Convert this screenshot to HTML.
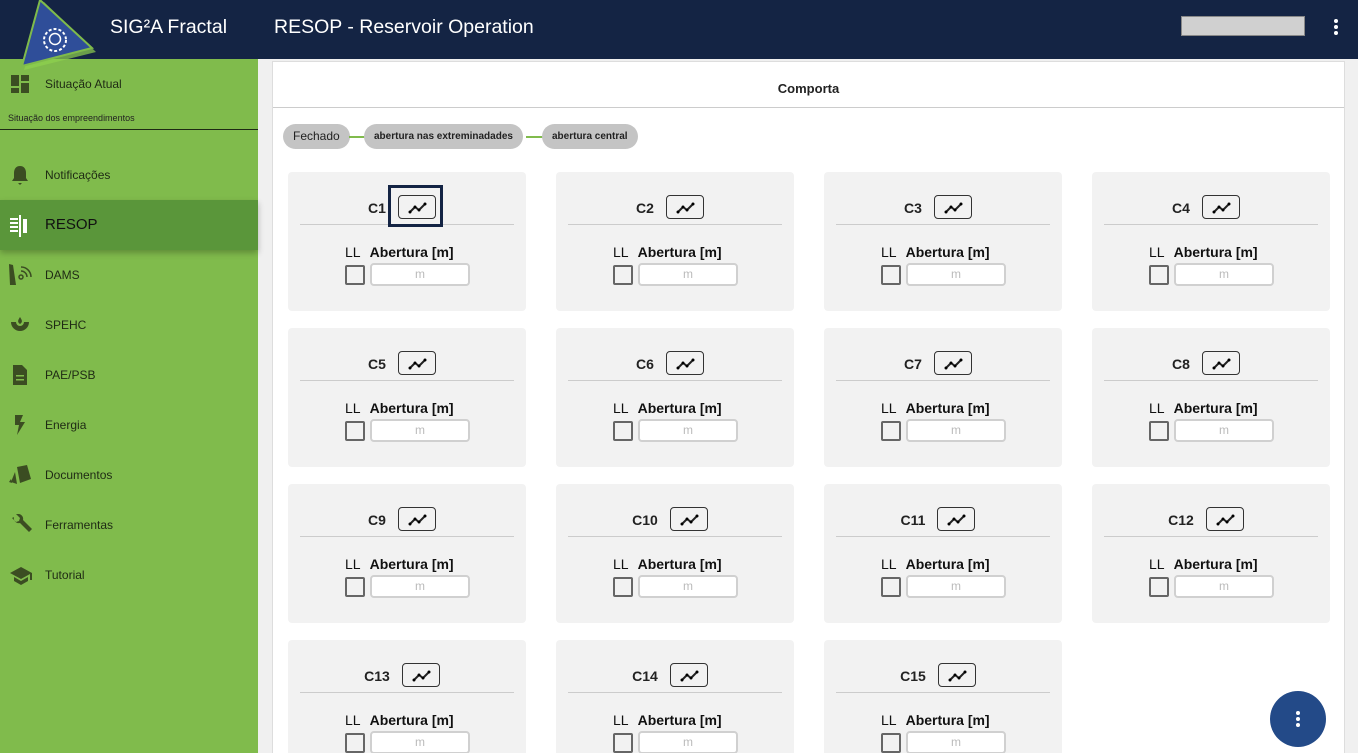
<!DOCTYPE html>
<html><head><meta charset="utf-8"><style>
*{box-sizing:border-box;margin:0;padding:0}
html,body{width:1358px;height:753px;overflow:hidden}
body{font-family:"Liberation Sans",Arial,sans-serif;background:#f0f0f0;position:relative}
.top{position:absolute;left:0;top:0;width:1358px;height:59px;background:#142444;color:#fff;z-index:2}
.top .t1{position:absolute;left:110px;top:16px;font-size:19.5px}
.top .t2{position:absolute;left:274px;top:16px;font-size:19.5px}
.srch{position:absolute;left:1181px;top:16px;width:124px;height:20px;background:#d0d0d0;border:1px solid #888}
.dots{position:absolute;left:1334px;top:19px}
.dots i{display:block;width:4px;height:4px;border-radius:50%;background:#fff;margin-bottom:2px}
.side{position:absolute;left:0;top:59px;width:258px;height:694px;background:#80bb4c}
.item{position:absolute;left:0;width:258px;height:50px;font-size:12px;color:#1e2a14}
.item span{position:absolute;left:45px;top:18px}
.item svg{position:absolute;left:9px;top:14px}
.panel{position:absolute;left:272px;top:61px;width:1073px;height:700px;background:#fff;border:1px solid #ddd}
.ptitle{height:46px;border-bottom:1px solid #ccc;text-align:center;font-size:13px;font-weight:bold;line-height:54px;color:#222}
.chip{position:absolute;top:62px;height:25px;border-radius:13px;background:#c4c4c4;font-size:12px;color:#222;padding:0 10px;line-height:25px}
.line{position:absolute;top:74px;height:2px;background:#80bb4c}
.card{position:absolute;width:238px;height:139px;background:#f2f2f2;border-radius:4px}
.hd{position:absolute;left:12px;right:12px;top:0;height:53px;border-bottom:1px solid #ccc;text-align:center;padding-top:28px;padding-right:10px;font-size:14px;font-weight:bold;color:#222}
.btn{display:inline-block;width:38px;height:24px;border:1px solid #333;border-radius:4px;vertical-align:middle;margin-left:12px;margin-top:-5px;position:relative}
.btn svg{position:absolute;left:9px;top:5px}
.sel{position:absolute;left:100px;top:13px;width:55px;height:42px;border:3px solid #142444}
.lab{position:absolute;left:57px;top:72px;font-size:14px;color:#111}
.lab b{margin-left:9px}
.cb{position:absolute;left:57px;top:93px;width:20px;height:20px;border:2px solid #666;border-radius:2px}
.in{position:absolute;left:82px;top:91px;width:100px;height:23px;border:2px solid #d0d0d0;border-radius:4px;background:#fff;text-align:center;font-size:12px;color:#bbb;line-height:18px}
.fab{position:absolute;left:1270px;top:691px;width:56px;height:56px;border-radius:50%;background:#234a88}
.fab i{position:absolute;left:26px;width:4px;height:4px;border-radius:50%;background:#fff}
</style></head><body>
<div class="top">
<svg style="position:absolute;left:18px;top:0" width="82" height="72" viewBox="0 0 82 72"><polygon points="26,2 78,52 6,70" fill="#8fd14f" opacity=".7"/><polygon points="22,0 74,48 4,66" fill="#2f4e99" stroke="#7fbb4b" stroke-width="2"/><circle cx="37" cy="40" r="11" fill="none" stroke="#fff" stroke-width="2" stroke-dasharray="3 2"/><circle cx="37" cy="39" r="5.5" fill="none" stroke="#fff" stroke-width="1.5"/></svg>
<div class="t1">SIG²A Fractal</div><div class="t2">RESOP - Reservoir Operation</div>
<div class="srch"></div><div class="dots"><i></i><i></i><i></i></div>
</div>
<div class="side">
<div class="item" style="top:0"><svg width="22" height="22"><rect x="2" y="2" width="8" height="11" fill="#3b4d22"/><rect x="12" y="2" width="8" height="6" fill="#3b4d22"/><rect x="2" y="15" width="8" height="5" fill="#3b4d22"/><rect x="12" y="10" width="8" height="10" fill="#3b4d22"/></svg><span>Situação Atual</span></div>
<div style="position:absolute;left:8px;top:54px;font-size:9px;color:#222">Situação dos empreendimentos</div>
<div style="position:absolute;left:0;top:70px;width:258px;height:1px;background:#1e2a14"></div>
<div class="item" style="top:91px"><svg width="22" height="22"><path d="M11 2c-4 0-6 3-6 7v5l-2 3h16l-2-3V9c0-4-2-7-6-7zM9 19h4l-2 2z" fill="#3b4d22"/></svg><span>Notificações</span></div>
<div class="item" style="top:141px;background:#5a963a;box-shadow:0 3px 6px rgba(0,0,0,.25)"><svg width="22" height="24"><g fill="#fff"><rect x="1" y="4" width="8" height="2"/><rect x="1" y="8" width="8" height="2"/><rect x="1" y="12" width="8" height="2"/><rect x="1" y="16" width="8" height="2"/><rect x="10" y="1" width="2" height="22"/><rect x="14" y="5" width="4" height="14"/></g></svg><span style="font-size:15px;top:16px;color:#111">RESOP</span></div>
<div class="item" style="top:191px"><svg width="24" height="24"><path d="M0 0l4 1 3 20H1z" fill="#3b4d22"/><circle cx="12" cy="13" r="2" fill="none" stroke="#3b4d22" stroke-width="1.5"/><path d="M12 7a6 6 0 016 6M12 3a10 10 0 0110 10" fill="none" stroke="#3b4d22" stroke-width="1.5"/></svg><span>DAMS</span></div>
<div class="item" style="top:241px"><svg width="22" height="22"><path d="M2 8a9 9 0 0018 0h-5a4 4 0 01-8 0z" fill="#3b4d22"/><path d="M11 3c-2 3-3 5 0 7 3-2 2-4 0-7z" fill="#3b4d22"/></svg><span>SPEHC</span></div>
<div class="item" style="top:291px"><svg width="22" height="22"><path d="M4 1h9l5 5v15H4z" fill="#3b4d22"/><rect x="7" y="11" width="8" height="1.5" fill="#80bb4c"/><rect x="7" y="15" width="8" height="1.5" fill="#80bb4c"/></svg><span>PAE/PSB</span></div>
<div class="item" style="top:341px"><svg width="22" height="22"><path d="M6 1h8l-3 7h5L8 21l2-10H6z" fill="#3b4d22"/></svg><span>Energia</span></div>
<div class="item" style="top:391px"><svg width="24" height="22"><path d="M8 3l10-2 4 14-11 4z" fill="#3b4d22"/><path d="M6 8l2 12-6-2z" fill="#3b4d22"/><path d="M2 15l1 4-3-1z" fill="#3b4d22"/></svg><span>Documentos</span></div>
<div class="item" style="top:441px"><svg width="24" height="24"><path d="M3 4l4 4 3-1 1-3-4-4c4-1 8 2 7 6l9 9-3 3-9-9c-4 1-7-3-6-6z" fill="#3b4d22"/></svg><span>Ferramentas</span></div>
<div class="item" style="top:491px"><svg width="24" height="22"><path d="M12 3L1 9l11 6 9-5v6h2V9z" fill="#3b4d22"/><path d="M5 13v4l7 4 7-4v-4l-7 4z" fill="#3b4d22"/></svg><span>Tutorial</span></div>
</div>
<div class="panel"><div class="ptitle">Comporta</div>
<div class="chip" style="left:10px">Fechado</div>
<div class="line" style="left:76px;width:16px"></div>
<div class="chip" style="left:91px;font-size:10px;font-weight:bold">abertura nas extreminadades</div>
<div class="line" style="left:253px;width:18px"></div>
<div class="chip" style="left:269px;font-size:10px;font-weight:bold">abertura central</div>
</div>
<div id="cards"></div>
<div class="fab"><i style="top:20px"></i><i style="top:26px"></i><i style="top:32px"></i></div>
<script>
var h='',svg='<svg width="20" height="14" viewBox="0 0 20 14"><path d="M2 11l5-5 4 3 6-6" fill="none" stroke="#222" stroke-width="2"/><circle cx="2" cy="11" r="1.5"/><circle cx="7" cy="6" r="1.5"/><circle cx="11" cy="9" r="1.5"/><circle cx="17" cy="3" r="1.5"/></svg>';
for(var i=0;i<15;i++){var c=i%4,r=Math.floor(i/4);var x=288+c*268,y=172+r*156;
h+='<div class="card" style="left:'+x+'px;top:'+y+'px"><div class="hd">C'+(i+1)+'<span class="btn">'+svg+'</span></div>'+(i==0?'<div class="sel"></div>':'')+'<div class="lab">LL<b>Abertura [m]</b></div><div class="cb"></div><div class="in">m</div></div>';}
document.getElementById('cards').innerHTML=h;
</script>
</body></html>
